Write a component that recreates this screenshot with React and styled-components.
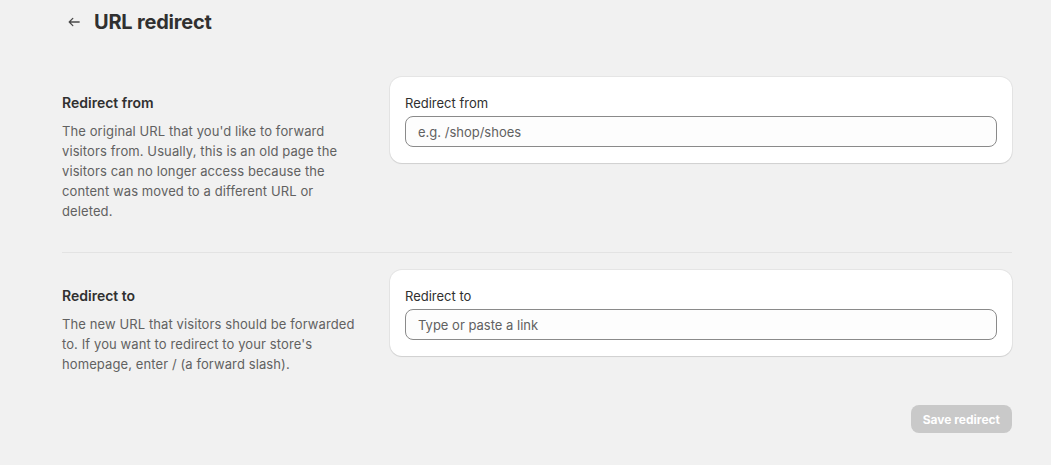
import React from "react";
import styled, { createGlobalStyle } from "styled-components";

const Global = createGlobalStyle`
  html, body { margin: 0; padding: 0; background: #f1f1f1; }
  body { font-family: Inter, "Noto Sans", sans-serif; color: #303030; -webkit-font-smoothing: antialiased; }
  * { box-sizing: border-box; }
`;

const Page = styled.div`
  padding: 0 39px 0 62px;
`;

const Header = styled.div`
  display: flex;
  align-items: center;
  gap: 10px;
  height: 43px;
  margin-left: 2px;
`;

const BackButton = styled.button`
  display: flex;
  align-items: center;
  justify-content: center;
  width: 20px;
  height: 20px;
  padding: 0;
  border: none;
  background: transparent;
  color: #4a4a4a;
  cursor: pointer;
`;

const Title = styled.h1`
  margin: 0;
  font-size: 20px;
  font-weight: 700;
  letter-spacing: -0.2px;
  color: #303030;
`;

const Section = styled.section`
  display: grid;
  grid-template-columns: 308px 1fr;
  gap: 20px;
  padding-top: ${(p) => p.$top}px;
  padding-bottom: ${(p) => p.$bottom}px;
  border-bottom: ${(p) => (p.$divider ? "1px solid #e3e3e3" : "none")};
`;

const Annotation = styled.div`
  padding: 16px 10px 0 0;
`;

const AnnotationTitle = styled.h2`
  margin: 0 0 8px;
  font-size: 14px;
  font-weight: 600;
  line-height: 20px;
  color: #303030;
`;

const AnnotationText = styled.p`
  margin: 0;
  font-size: 13px;
  letter-spacing: 0.1px;
  line-height: 20px;
  color: #616161;
`;

const Card = styled.div`
  align-self: start;
  background: #ffffff;
  border-radius: 12px;
  padding: 16px 15px 16px 15px;
  box-shadow: 0 1px 1px rgba(26, 26, 26, 0.1), 0 0 0 1px rgba(26, 26, 26, 0.05);
`;

const Label = styled.label`
  display: block;
  font-size: 13px;
  line-height: 20px;
  color: #303030;
  margin-bottom: 3px;
`;

const Input = styled.input`
  display: block;
  width: 100%;
  height: 31px;
  padding: 0 12px;
  font-family: inherit;
  font-size: 13px;
  color: #303030;
  background: #fdfdfd;
  border: 1px solid #8a8a8a;
  border-radius: 8px;
  outline: none;
  &::placeholder { color: #616161; }
`;

const Footer = styled.div`
  display: flex;
  justify-content: flex-end;
  padding-top: 31px;
`;

const SaveButton = styled.button`
  height: 28px;
  padding: 0 12px;
  border: none;
  border-radius: 8px;
  background: #c9c9c9;
  color: #ffffff;
  font-family: inherit;
  font-size: 12px;
  font-weight: 700;
  cursor: default;
`;

const ArrowLeft = () => (
  <svg width="16" height="16" viewBox="0 0 20 20" fill="none">
    <path d="M16.5 10H4M8.5 5.5L4 10l4.5 4.5" stroke="currentColor" strokeWidth="1.6" strokeLinecap="round" strokeLinejoin="round" />
  </svg>
);

export default function App() {
  return (
    <>
      <Global />
      <Page>
        <Header>
          <BackButton aria-label="Back"><ArrowLeft /></BackButton>
          <Title>URL redirect</Title>
        </Header>
        <Section $top={34} $bottom={31} $divider>
          <Annotation>
            <AnnotationTitle>Redirect from</AnnotationTitle>
            <AnnotationText>
              The original URL that you'd like to forward visitors from. Usually, this is an old page the visitors can no longer access because the content was moved to a different URL or deleted.
            </AnnotationText>
          </Annotation>
          <Card>
            <Label>Redirect from</Label>
            <Input placeholder="e.g. /shop/shoes" />
          </Card>
        </Section>
        <Section $top={17} $bottom={0}>
          <Annotation>
            <AnnotationTitle>Redirect to</AnnotationTitle>
            <AnnotationText>
              The new URL that visitors should be forwarded to. If you want to redirect to your store's homepage, enter / (a forward slash).
            </AnnotationText>
          </Annotation>
          <Card>
            <Label>Redirect to</Label>
            <Input placeholder="Type or paste a link" />
          </Card>
        </Section>
        <Footer>
          <SaveButton disabled>Save redirect</SaveButton>
        </Footer>
      </Page>
    </>
  );
}
